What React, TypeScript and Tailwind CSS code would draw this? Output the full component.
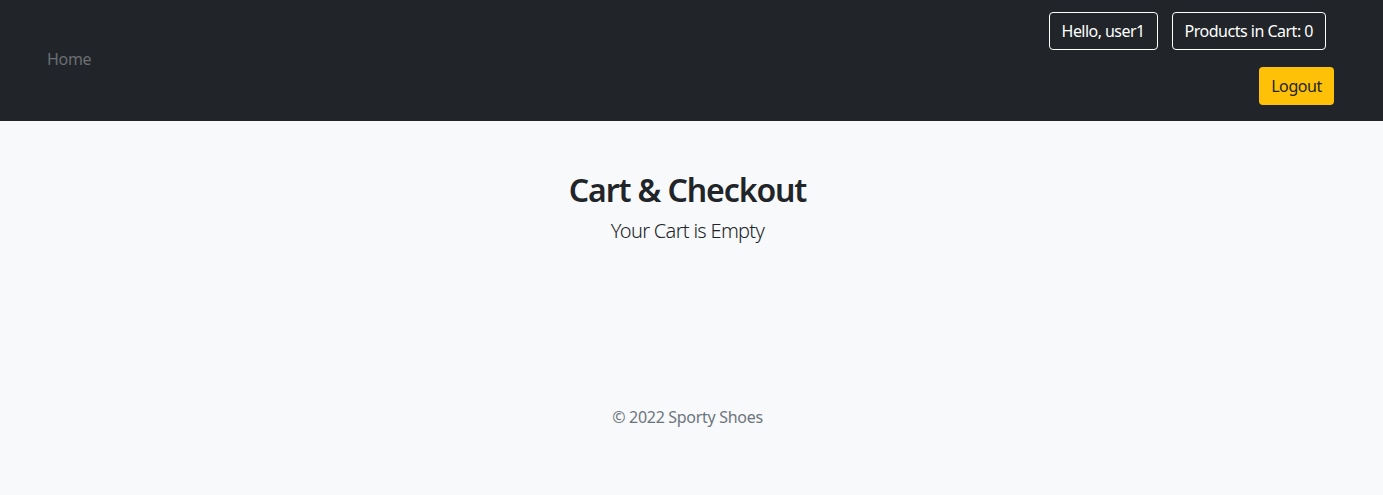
import React from "react";

export default function App() {
  const font = { fontFamily: '"Noto Sans", "Open Sans", sans-serif' };
  return (
    <div className="min-h-[495px] bg-[#f8f9fa] text-[#212529]" style={font}>
      <nav className="h-[121px] bg-[#212529] flex items-center justify-between pl-[39px] pr-[49px]">
        <a className="px-2 text-[16px] leading-6 text-[#6a6e73] tracking-[-0.3px] -mt-[3px]">Home</a>
        <div className="flex flex-col items-end gap-[17px] -mt-[4px]">
          <div className="flex gap-[14px] mr-2">
            <span className="h-[38px] px-3 flex items-center border border-white rounded text-white text-[16px] tracking-[-0.55px]">Hello, user1</span>
            <span className="h-[38px] px-3 flex items-center border border-white rounded text-white text-[16px] tracking-[-0.5px]">Products in Cart: 0</span>
          </div>
          <button className="h-[38px] px-3 flex items-center rounded bg-[#ffc107] text-[#212529] text-[16px] tracking-[-0.4px]">Logout</button>
        </div>
      </nav>
      <main className="flex flex-col items-center pt-[50px] pr-[8px]">
        <h2 className="text-[32px] leading-[38px] font-semibold mb-[7px] tracking-[-1.1px]">Cart &amp; Checkout</h2>
        <p className="text-[20px] leading-[30px] font-light text-[#212529] tracking-[-0.7px]">Your Cart is Empty</p>
      </main>
      <footer className="flex justify-center pt-[159px] pb-[66px] pr-[8px]">
        <p className="text-[16px] leading-6 text-[#6c757d] tracking-[-0.3px]">© 2022 Sporty Shoes</p>
      </footer>
    </div>
  );
}
